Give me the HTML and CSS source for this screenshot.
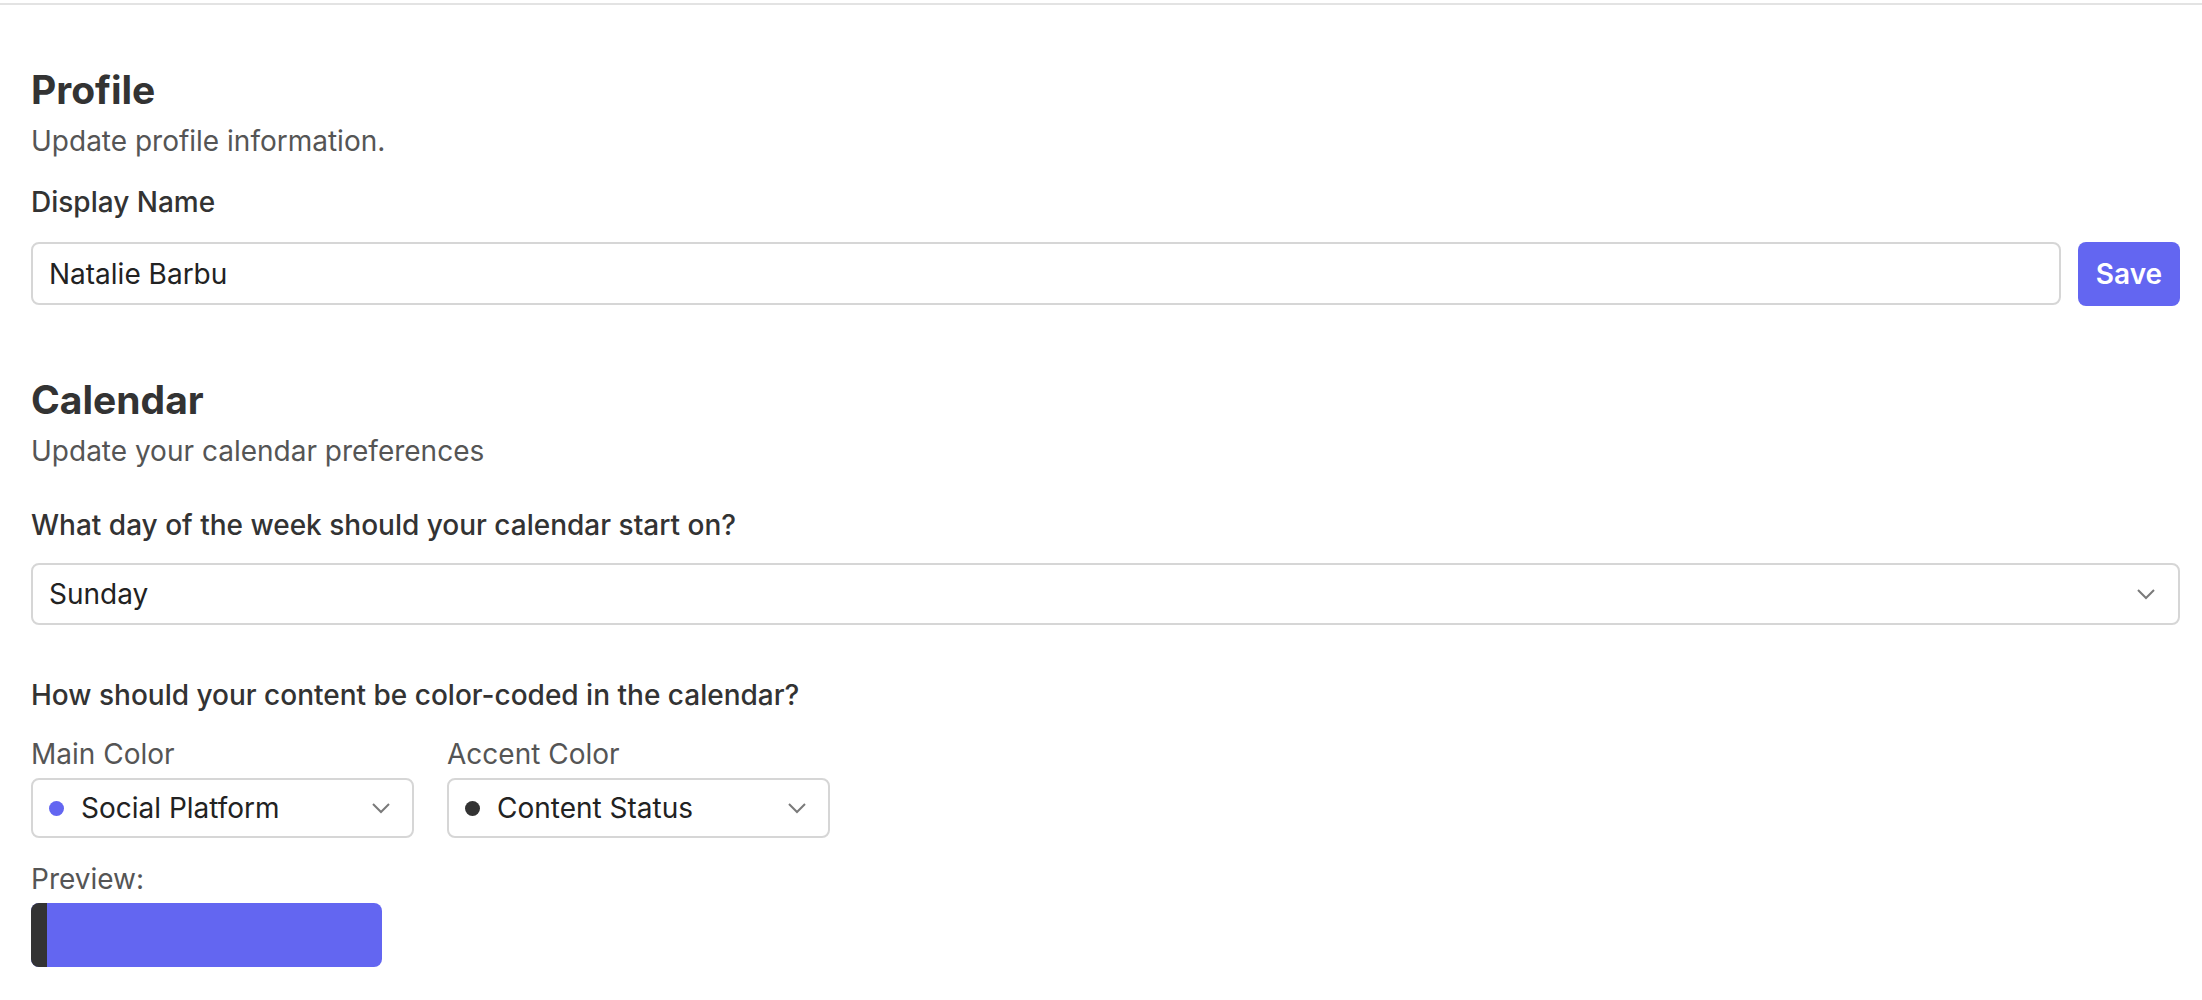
FILE: index.html
```html
<!DOCTYPE html>
<html lang="en">
<head>
  <meta charset="UTF-8" />
  <meta name="viewport" content="width=device-width, initial-scale=1.0" />
  <title>Settings</title>
  <link rel="stylesheet" href="styles.css">
</head>
<body>
  <div class="topline"></div>

  <div class="settings">
    <section class="profile">
      <h2>Profile</h2>
      <p class="sub">Update profile information.</p>
      <label class="field-label" for="displayName">Display Name</label>
      <div class="name-row">
        <input type="text" id="displayName" class="text-input" value="Natalie Barbu" />
        <button class="save-btn">Save</button>
      </div>
    </section>

    <section class="calendar">
      <h2>Calendar</h2>
      <p class="sub">Update your calendar preferences</p>

      <div class="field-label week-label">What day of the week should your calendar start on?</div>
      <div class="select select-full">
        <span>Sunday</span>
        <svg class="chevron" width="20" height="12" viewBox="0 0 20 12"><polyline points="2,2 10,10 18,2" /></svg>
      </div>

      <div class="field-label color-label">How should your content be color-coded in the calendar?</div>
      <div class="color-row">
        <div class="color-field">
          <div class="small-label">Main Color</div>
          <div class="select select-small">
            <span class="dot dot-main"></span>
            <span class="select-text">Social Platform</span>
            <svg class="chevron" width="20" height="12" viewBox="0 0 20 12"><polyline points="2,2 10,10 18,2" /></svg>
          </div>
        </div>
        <div class="color-field">
          <div class="small-label">Accent Color</div>
          <div class="select select-small">
            <span class="dot dot-accent"></span>
            <span class="select-text">Content Status</span>
            <svg class="chevron" width="20" height="12" viewBox="0 0 20 12"><polyline points="2,2 10,10 18,2" /></svg>
          </div>
        </div>
      </div>

      <div class="small-label preview-label">Preview:</div>
      <div class="preview">
        <div class="preview-accent"></div>
      </div>
    </section>
  </div>
</body>
</html>
```

FILE: styles.css
```css
body {
  margin: 0;
  font-family: Inter, "Noto Sans", sans-serif;
  background: #fff;
  color: #333;
}
.topline {
  margin-top: 3px;
  height: 2px;
  background: #e3e3e3;
}
.settings {
  padding: 61px 22px 0 31px;
}
h2 {
  margin: 0;
  font-size: 39px;
  line-height: 47px;
  font-weight: 700;
  color: #333;
}
.calendar h2 {
  margin-top: 70px;
}
.sub {
  margin: 7px 0 0;
  font-size: 28px;
  line-height: 42px;
  color: #555;
}
.field-label {
  display: block;
  margin-top: 19px;
  font-size: 28px;
  line-height: 42px;
  font-weight: 500;
  color: #333;
}
.week-label {
  margin-top: 32px;
}
.color-label {
  margin-top: 49px;
}
.name-row {
  display: flex;
  gap: 17px;
  margin-top: 19px;
}
.text-input {
  flex: 1;
  box-sizing: border-box;
  height: 63px;
  padding: 0 16px;
  border: 2px solid #d6d6d6;
  border-radius: 8px;
  font-family: inherit;
  font-size: 28px;
  color: #222;
  outline: none;
}
.save-btn {
  width: 102px;
  height: 64px;
  border: none;
  border-radius: 8px;
  background: #6366f1;
  color: #fff;
  font-family: inherit;
  font-size: 28px;
  font-weight: 600;
  cursor: pointer;
}
.select {
  box-sizing: border-box;
  display: flex;
  align-items: center;
  border: 2px solid #d6d6d6;
  border-radius: 8px;
  font-size: 28px;
  color: #222;
  background: #fff;
}
.select-full {
  height: 62px;
  margin-top: 17px;
  padding: 0 22px 0 16px;
  justify-content: space-between;
}
.chevron {
  fill: none;
  stroke: #7a7a7a;
  stroke-width: 2;
}
.color-row {
  display: flex;
  gap: 33px;
  margin-top: 17px;
}
.small-label {
  font-size: 28px;
  line-height: 42px;
  color: #555;
}
.select-small {
  width: 383px;
  height: 60px;
  margin-top: 3px;
  padding: 0 21px 0 16px;
}
.select-text {
  flex: 1;
}
.dot {
  width: 15px;
  height: 15px;
  border-radius: 50%;
  margin-right: 17px;
}
.dot-main {
  background: #6366f1;
}
.dot-accent {
  background: #333;
}
.preview-label {
  margin-top: 20px;
}
.preview {
  width: 351px;
  height: 64px;
  margin-top: 3px;
  border-radius: 8px;
  background: #6366f1;
  overflow: hidden;
}
.preview-accent {
  width: 16px;
  height: 100%;
  background: #333;
}
```
